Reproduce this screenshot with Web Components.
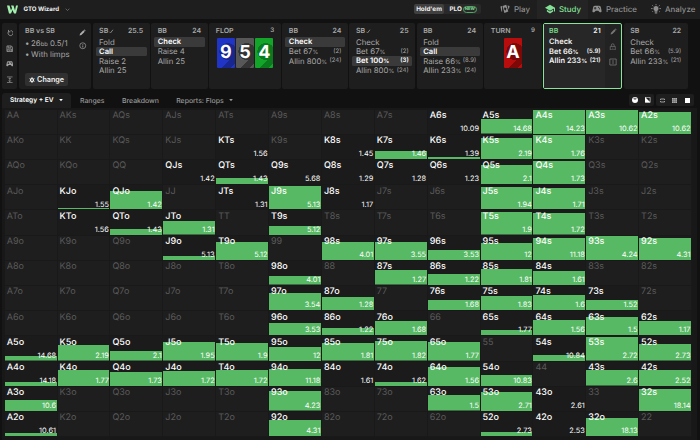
<!DOCTYPE html>
<html lang="en">
<head>
<meta charset="utf-8">
<title>GTO Wizard</title>
<style>
    html, body {
        background: #111;
        height: 440px;
        margin: 0;
        overflow: hidden;
        width: 700px;
    }
    body {
        color: #a8a8a8;
        display: flex;
        flex-direction: column;
        font-family: Inter, "Liberation Sans", sans-serif;
        font-size: 7.8px;
        text-rendering: geometricPrecision;
    }
    .history {
        display: grid;
        gap: 1.6px;
        grid-template-columns: 15px 72.4px 57px 56.6px 71.4px 65.5px 65.7px 66px 57.2px 79px 64px;
        height: 66px;
        padding: 4.5px 0 0 2px;
    }
    .toolbar {
        align-items: stretch;
        display: flex;
        height: 15px;
        margin-top: 3.5px;
        padding-left: 2px;
    }
</style>
</head>
<body>
<app-header>
    <nav-item icon="cards" style="width: 41px">Play</nav-item>
    <nav-item icon="study" active style="width: 51px">Study</nav-item>
    <nav-item icon="gamepad" style="width: 59px">Practice</nav-item>
    <nav-item icon="bulb" style="width: 52px">Analyze</nav-item>
</app-header>

<div class="history">
    <side-tools icons="undo save gamepad fit"></side-tools>
    <game-info name="BB vs SB"><span slot="stack">26<small style="font-size: 5.8px">bb</small> 0.5/1</span><span slot="limps">With limps</span></game-info>
    <action-panel player="SB" stack="25.5" note actions="Fold|*Call|Raise 2|Allin 25"></action-panel>
    <action-panel player="BB" stack="24" actions="*Check|Raise 4|Allin 25"></action-panel>
    <street-panel player="FLOP" stack="3">
        <board-card color="#2034c6" shade="#18268f">9</board-card>
        <board-card color="#575757" shade="#343434">5</board-card>
        <board-card color="#12a52a" shade="#0b7a1d">4</board-card>
    </street-panel>
    <action-panel player="BB" stack="24" actions="*Check|Bet 67%:(2)|Allin 800%:(24)"></action-panel>
    <action-panel player="SB" stack="25" note actions="Check|Bet 67%:(2)|*Bet 100%:(3)|Allin 800%:(24)"></action-panel>
    <action-panel player="BB" stack="24" actions="Fold|*Call|Raise 66%:(8.9)|Allin 233%:(24)"></action-panel>
    <street-panel player="TURN" stack="9">
        <board-card color="#b80d0d" shade="#7c0808">A</board-card>
    </street-panel>
    <action-panel player="BB" stack="21" current actions="Check|Bet 66%:(5.9)|Allin 233%:(21)"></action-panel>
    <action-panel player="SB" stack="22" actions="Check|Bet 66%:(5.9)|Allin 233%:(21)"></action-panel>
</div>

<div class="toolbar">
    <tab-item active arrow style="width: 68.5px">Strategy + EV</tab-item>
    <tab-item style="width: 43.5px">Ranges</tab-item>
    <tab-item style="width: 53px">Breakdown</tab-item>
    <tab-item arrow style="width: 75px">Reports: Flops</tab-item>
    <view-switch></view-switch>
</div>

<range-grid></range-grid>

<script>
'use strict';

(function() {
    const ICONS = {
        undo: '<path d="M8 3v6h6M8 8.5A8 8 0 1 0 15 5" fill="none" stroke="currentColor" stroke-width="2.6"/>',
        save: '<path d="M3 3h14l4 4v14H3z M7 3v6h9V3 M6 21v-8h12v8 M9 17h6" fill="none" stroke="currentColor" stroke-width="2.4"/>',
        gamepad: '<path fill="currentColor" fill-rule="evenodd" d="M7 4h10c3 0 4 2 4.5 5L23 17c.4 3-3 4-5 2l-3-3H9l-3 3c-2 2-5.4 1-5-2L2.5 9C3 6 4 4 7 4zM6.5 7v2h-2v2h2v2h2v-2h2V9h-2V7zM16 6.5a1.4 1.4 0 1 0 .01 0zM18 10a1.4 1.4 0 1 0 .01 0z"/>',
        fit: '<path d="M3 3h18M3 21h18M12 6v12M8.5 9.5L12 6l3.5 3.5M8.5 14.5L12 18l3.5-3.5" fill="none" stroke="currentColor" stroke-width="2.2"/>',
        pencil: '<path fill="currentColor" d="M2 22l1.5-6L15 4.5l4.5 4.5L8 20.5zM16.5 3l2-1.5L22.5 5 21 7.5z"/>',
        info: '<circle cx="12" cy="12" r="9.5" fill="none" stroke="currentColor" stroke-width="2"/><path d="M12 11v6.5M12 6.5v2.2" stroke="currentColor" stroke-width="2.4"/>',
        gear: '<path fill="none" stroke="currentColor" stroke-width="5" d="M12 6a6 6 0 1 0 .01 0z"/><path stroke="currentColor" stroke-width="4" d="M12 1v4M12 19v4M2.5 6.5l3.5 2M18 15.5l3.5 2M2.5 17.5l3.5-2M18 8.5l3.5-2"/>',
        lock: '<path d="M4 11h16v11H4zM7.5 11V7a4.5 4.5 0 0 1 9 0v4M12 15v3" fill="none" stroke="currentColor" stroke-width="2.2"/>',
        compare: '<path d="M9 3H2.5v18H9M15 3h6.5v18H15M12 0v24" fill="none" stroke="currentColor" stroke-width="2.4"/>',
        cards: '<path fill="currentColor" d="M1 6l4-1.5v14L3.5 18zM6 4.5L15 2l5 16-9.5 3.5zM18 3.5l5 1.5-2 9z"/><path fill="#1e1e1e" d="M11.5 7l4 4-2 5-4-4z"/>',
        study: '<path fill="currentColor" d="M12 2L0 9l12 7 9.5-5.5V18H24V9zM4.5 13.5V18l7.5 4.5 7.5-4.5v-4.5L12 18z"/>',
        bulb: '<path fill="currentColor" d="M12 5a6 6 0 0 0-3.5 11v2.5h7V16A6 6 0 0 0 12 5zM9 20h6v2.5H9z"/><path stroke="currentColor" stroke-width="2" d="M12 0v3M0 11h4M20 11h4M3 3l2.5 2.5M21 3l-2.5 2.5M3 19l2-2M21 19l-2-2"/>',
        check: '<path d="M3 17l5 4L21 4" fill="none" stroke="currentColor" stroke-width="4"/>',
        chevron: '<path d="M3 8l9 9 9-9" fill="none" stroke="currentColor" stroke-width="3"/>',
        arrow: '<path fill="currentColor" d="M1 6h22L12 19z"/>'
    };

    const icon = (name, size, extra = '') =>
        `<svg viewBox="0 0 24 24" width="${size}" height="${size}" style="flex: none; display: block; ${extra}">${ICONS[name]}</svg>`;

    class BaseElement extends HTMLElement {
        constructor() {
            super();
            this.attachShadow({ mode: 'open' });
        }

        connectedCallback() {
            this.shadowRoot.innerHTML = this.render();
        }
    }

    class AppHeader extends BaseElement {
        render() {
            return `
                <style>
                    :host {
                        align-items: center;
                        background: #1e1e1e;
                        box-sizing: border-box;
                        display: flex;
                        flex: none;
                        height: 18.5px;
                        overflow: hidden;
                        padding-left: 6.5px;
                    }
                    .name {
                        color: #f2f2f2;
                        font-size: 6.1px;
                        font-weight: 700;
                        margin: 0 5px 0 6px;
                        white-space: nowrap;
                        width: 36px;
                    }
                    .games {
                        align-items: center;
                        background: #292929;
                        border-radius: 2px;
                        color: #f0f0f0;
                        display: flex;
                        font-size: 6.3px;
                        font-weight: 700;
                        height: 10px;
                        margin-left: auto;
                        width: 67px;
                    }
                    .holdem {
                        background: #404040;
                        border-radius: 2px;
                        line-height: 10px;
                        margin-right: 5.5px;
                        text-align: center;
                        width: 30px;
                    }
                    .new {
                        border: 1px solid #4fa565;
                        border-radius: 4px;
                        color: #86e29a;
                        font-size: 4.2px;
                        line-height: 5px;
                        margin-left: 1px;
                        padding: 0 1px;
                    }
                    nav {
                        align-self: stretch;
                        display: flex;
                        margin-left: 15px;
                        width: 204px;
                    }
                </style>
                <svg width="11" height="9" viewBox="0 0 22 18"><path fill="#a3f0b0" d="M0 1h5l3 10 2-5-2-5h5l3 10 2-10h4l-4 16h-4l-3-7-3 7H4z"/></svg>
                <span class="name">GTO Wizard</span>
                ${icon('chevron', 5, 'color: #8a8a8a')}
                <div class="games"><span class="holdem">Hold'em</span><span>PLO</span><span class="new">NEW</span></div>
                <nav><slot></slot></nav>
            `;
        }
    }

    class NavItem extends BaseElement {
        render() {
            return `
                <style>
                    :host {
                        align-items: center;
                        box-sizing: border-box;
                        color: #8f8f8f;
                        display: flex;
                        flex: none;
                        font-size: 7.9px;
                        font-weight: 500;
                        gap: 4px;
                        padding-left: 4px;
                        white-space: nowrap;
                    }
                    :host([active]) {
                        background: #242424;
                        color: #83e097;
                        padding-left: 8px;
                    }
                </style>
                ${icon(this.getAttribute('icon'), 10)}<slot></slot>
            `;
        }
    }

    class SideTools extends BaseElement {
        render() {
            return `
                <style>
                    :host {
                        align-items: center;
                        background: #1e1e1e;
                        border-radius: 2px;
                        box-sizing: border-box;
                        color: #a0a0a0;
                        display: flex;
                        flex-direction: column;
                        justify-content: space-between;
                        padding: 6px 0;
                    }
                </style>
                ${this.getAttribute('icons').split(' ').map(a => icon(a, 7.5)).join('')}
            `;
        }
    }

    class GameInfo extends BaseElement {
        render() {
            return `
                <style>
                    :host {
                        background: #1e1e1e;
                        border-radius: 2px;
                        display: flex;
                        justify-content: space-between;
                    }
                    .info { padding: 3px 0 0 6.5px; }
                    .name { font-size: 7px; font-weight: 600; line-height: 10px; }
                    ul {
                        line-height: 11px;
                        list-style: none;
                        margin: 1.5px 0 0;
                        padding: 0;
                        white-space: nowrap;
                    }
                    li { height: 11px; }
                    li::before { content: "•"; display: inline-block; width: 6px; }
                    button {
                        align-items: center;
                        background: #303030;
                        border: 0;
                        border-radius: 2px;
                        color: #f2f2f2;
                        display: flex;
                        font: 600 7.2px Inter, sans-serif;
                        gap: 2px;
                        height: 13px;
                        justify-content: center;
                        margin-top: 13.5px;
                        padding: 0;
                        width: 43px;
                    }
                    .side {
                        align-items: center;
                        color: #b0b0b0;
                        display: flex;
                        flex-direction: column;
                        gap: 6.5px;
                        padding-top: 5.5px;
                        width: 16px;
                    }
                </style>
                <div class="info">
                    <div class="name">${this.getAttribute('name')}</div>
                    <ul><li><slot name="stack"></slot></li><li><slot name="limps"></slot></li></ul>
                    <button>${icon('gear', 6)}Change</button>
                </div>
                <div class="side">${icon('pencil', 7)}${icon('info', 7.5)}</div>
            `;
        }
    }

    const PANEL_STYLE = `
        :host {
            background: #1e1e1e;
            border-radius: 2px;
            box-sizing: border-box;
            display: block;
            min-width: 0;
            padding: 3px 3px 0;
        }
        header {
            align-items: center;
            display: flex;
            font-size: 7px;
            font-weight: 600;
            line-height: 10px;
            margin-bottom: 1px;
            padding: 0 3.5px;
        }
        header b { font-weight: 600; margin-left: auto; }
    `;

    class ActionPanel extends BaseElement {
        get actions() {
            return this.getAttribute('actions').split('|').map(a => {
                const taken = a[0] === '*';
                const [label, size] = a.replace('*', '').split(':');
                return { taken, label, size };
            });
        }

        render() {
            const current = this.hasAttribute('current');
            return `
                <style>
                    ${PANEL_STYLE}
                    .row {
                        align-items: center;
                        border-radius: 1.5px;
                        display: flex;
                        height: 9.5px;
                        justify-content: space-between;
                        padding: 0 3.5px;
                        white-space: nowrap;
                    }
                    .row small { font-size: 6px; }
                    .row i { font-size: 5.9px; font-style: normal; }
                    .row.taken { background: #3a3a3a; color: #fff; font-weight: 600; }
                    .row.taken span { font-size: 7.6px; }
                    :host([current]) {
                        background: #222;
                        border: 1px solid #85e598;
                        display: grid;
                        grid-template-columns: 1fr 16px;
                        padding: 0;
                    }
                    :host([current]) .main {
                        background: #272727;
                        color: #f2f2f2;
                        font-size: 7.5px;
                        font-weight: 600;
                        padding: 2px 1px 0 1.5px;
                    }
                    :host([current]) header span { color: #79d98c; }
                    .side {
                        align-items: center;
                        color: #777;
                        display: flex;
                        flex-direction: column;
                        gap: 7.5px;
                        padding-top: 4px;
                    }
                </style>
                <div class="main">
                    <header><span>${this.getAttribute('player')}</span>${this.hasAttribute('note') ? icon('check', 4.5, 'margin-left: 1px') : ''}<b>${this.getAttribute('stack')}</b></header>
                    ${this.actions.map(a => `
                        <div class="row${a.taken ? ' taken' : ''}"><span>${a.label.replace('%', '<i>%</i>')}</span>${a.size ? `<small>${a.size}</small>` : ''}</div>
                    `).join('')}
                </div>
                ${current ? `<div class="side">${icon('pencil', 7)}${icon('lock', 7.5)}${icon('compare', 8)}</div>` : ''}
            `;
        }
    }

    class StreetPanel extends BaseElement {
        render() {
            return `
                <style>
                    ${PANEL_STYLE}
                    .cards { display: flex; gap: 1px; justify-content: center; margin-top: 1.5px; }
                    header b { font-size: 6.2px; }
                </style>
                <header><span>${this.getAttribute('player')}</span><b>${this.getAttribute('stack')}</b></header>
                <div class="cards"><slot></slot></div>
            `;
        }
    }

    class BoardCard extends BaseElement {
        render() {
            const shade = this.getAttribute('shade');
            return `
                <style>
                    :host {
                        background: linear-gradient(135deg, transparent 72%, ${shade} 72%, ${shade} 90%, transparent 90%),
                            radial-gradient(circle at 60% 45%, ${shade} 42%, transparent 43%), ${this.getAttribute('color')};
                        border-radius: 1px;
                        color: #fff;
                        display: block;
                        font-size: 18px;
                        font-weight: 700;
                        height: 30px;
                        line-height: 30px;
                        text-align: center;
                        width: 18.2px;
                    }
                </style>
                <slot></slot>
            `;
        }
    }

    class TabItem extends BaseElement {
        render() {
            return `
                <style>
                    :host {
                        align-items: center;
                        border-radius: 3px 3px 0 0;
                        box-sizing: border-box;
                        color: #9a9a9a;
                        display: flex;
                        flex: none;
                        font-size: 6.9px;
                        font-weight: 500;
                        gap: 5px;
                        justify-content: center;
                        white-space: nowrap;
                    }
                    :host([active]) { background: #1e1e1e; color: #fff; font-size: 6.6px; font-weight: 600; }
                </style>
                <slot></slot>${this.hasAttribute('arrow') ? icon('arrow', 4) : ''}
            `;
        }
    }

    class ViewSwitch extends BaseElement {
        render() {
            return `
                <style>
                    :host { align-items: center; display: flex; gap: 2px; margin: 0 6px 0 auto; }
                    div {
                        align-items: center;
                        background: #1e1e1e;
                        border-radius: 2px;
                        display: flex;
                        height: 12px;
                        justify-content: space-around;
                        width: 25px;
                    }
                    div + div { width: 38px; }
                    svg { display: block; }
                </style>
                <div>
                    <svg width="6" height="6" viewBox="0 0 12 12"><circle cx="6" cy="6" r="6" fill="#fff"/><path d="M6 6L2 3.5 6 1l4 2.5z" fill="#777"/></svg>
                    <svg width="5.5" height="5.5" viewBox="0 0 11 11"><path d="M.7.7h9.6v9.6H.7z" fill="none" stroke="#ddd" stroke-width="1.4"/><path d="M0 0l11 11H0z" fill="#fff"/></svg>
                </div>
                <div>
                    <svg width="5" height="5" viewBox="0 0 10 10"><path d="M1 4V2h8v2M1 6v2h8V6" fill="none" stroke="#aaa" stroke-width="1.8"/></svg>
                    <svg width="5" height="5" viewBox="0 0 10 10"><path d="M0 0h10v10H0z" fill="#aaa"/><path d="M3.3 0v10M6.7 0v10M0 3.3h10M0 6.7h10" stroke="#444" stroke-width=".7"/></svg>
                    <svg width="5" height="5" viewBox="0 0 10 10"><path d="M0 0h10v10H0z" fill="#fff"/></svg>
                </div>
            `;
        }
    }

    class HandCell extends BaseElement {
        render() {
            const ev = this.getAttribute('ev');
            return `
                <style>
                    :host {
                        background: linear-gradient(#58b964, #58b964) left bottom / 100% ${this.getAttribute('bar') || 0}px no-repeat, #1e1e1e;
                        background-origin: content-box;
                        border: solid #191919;
                        border-width: 0 1px 1px 0;
                        box-sizing: border-box;
                        color: #5a5a5a;
                        display: flex;
                        flex-direction: column;
                        justify-content: space-between;
                        line-height: 9px;
                        min-width: 0;
                    }
                    :host([ev]) { background-color: #1b1b1b; color: #fff; }
                    .hand { font-size: 9px; margin: 1.4px 0 0 2px; }
                    :host([ev]) .hand { font-weight: 500; }
                    .ev { align-self: flex-end; font-size: 7.4px; margin: 0 .5px .9px 0; }
                </style>
                <span class="hand">${this.getAttribute('hand')}</span>
                ${ev ? `<span class="ev">${ev}</span>` : ''}
            `;
        }
    }

    // hand: [ev, height of the strategy bar]
    const HANDS = {
        A6s: [10.09, 0], A5s: [14.68, 14.5], A4s: [14.23, 24], A3s: [10.62, 24.5], A2s: [10.62, 22],
        KTs: [1.56, 0], K8s: [1.45, 0], K7s: [1.46, 8], K6s: [1.39, 2], K5s: [2.19, 21.5], K4s: [1.76, 24],
        QJs: [1.42, 0], QTs: [1.43, 6], Q9s: [5.68, 0], Q8s: [1.29, 0], Q7s: [1.28, 0], Q6s: [1.23, 0], Q5s: [2.1, 19], Q4s: [1.73, 23],
        KJo: [1.55, 1.3], QJo: [1.42, 18], JTs: [1.31, 0], J9s: [5.13, 23], J8s: [1.17, 0], J5s: [1.94, 22], J4s: [1.71, 21],
        KTo: [1.56, 0], QTo: [1.43, 6], JTo: [1.31, 13.5], T9s: [5.12, 9], T5s: [1.9, 22.5], T4s: [1.72, 21.5],
        J9o: [5.13, 4], T9o: [5.12, 18], '98s': [4.01, 18], '97s': [3.55, 18], '96s': [3.53, 10], '95s': [12, 17], '94s': [11.18, 22], '93s': [4.24, 24.5], '92s': [4.31, 22],
        '98o': [4.01, 8.5], '87s': [1.27, 14.5], '86s': [1.22, 11], '85s': [1.81, 16], '84s': [1.61, 14],
        '97o': [3.54, 17], '87o': [1.28, 13], '76s': [1.68, 10], '75s': [1.83, 14], '74s': [1.6, 15], '73s': [1.52, 10.5],
        '96o': [3.53, 12], '86o': [1.22, 7], '76o': [1.68, 14.5], '65s': [1.77, 5], '64s': [1.56, 15], '63s': [1.5, 18.5], '62s': [1.17, 14],
        A5o: [14.68, 4.5], K5o: [2.19, 15.5], Q5o: [2.1, 9.5], J5o: [1.95, 18.5], T5o: [1.9, 17.5], '95o': [12, 14], '85o': [1.81, 17.5], '75o': [1.82, 19.5], '65o': [1.77, 18.5], '54s': [10.84, 6], '53s': [2.72, 23.5], '52s': [2.73, 16.5],
        A4o: [14.18, 4], K4o: [1.77, 16], Q4o: [1.73, 14], J4o: [1.72, 15], T4o: [1.72, 16], '94o': [11.18, 17], '84o': [1.61, 0], '74o': [1.62, 4], '64o': [1.56, 19], '54o': [10.83, 11], '43s': [2.6, 15.5], '42s': [2.52, 16],
        A3o: [10.6, 11], '93o': [4.23, 19.5], '63o': [1.5, 15.5], '53o': [2.71, 19], '43o': [2.61, 0], '32s': [18.14, 22],
        A2o: [10.61, 3], '92o': [4.31, 16.5], '52o': [2.73, 4], '42o': [2.53, 0], '32o': [18.13, 18]
    };

    class RangeGrid extends BaseElement {
        get cells() {
            const ranks = [...'AKQJT98765432'];
            return ranks.map((row, y) => ranks.map((col, x) => {
                const hand = x === y ? row + col : x > y ? `${row}${col}s` : `${col}${row}o`;
                const data = HANDS[hand];
                return `<hand-cell hand="${hand}"${data ? ` ev="${data[0]}" bar="${data[1]}"` : ''}></hand-cell>`;
            }).join('')).join('');
        }

        render() {
            return `
                <style>
                    :host {
                        background: #181818;
                        box-sizing: border-box;
                        display: block;
                        flex: 1;
                        margin: 0 3px 0 2px;
                        padding: 2.2px 0 0 2.7px;
                    }
                    .grid {
                        display: grid;
                        grid-template-columns: repeat(13, 1fr);
                        grid-template-rows: repeat(13, 1fr);
                        height: 327.4px;
                        width: 687.3px;
                    }
                </style>
                <div class="grid">${this.cells}</div>
            `;
        }
    }

    customElements.define('app-header', AppHeader);
    customElements.define('nav-item', NavItem);
    customElements.define('side-tools', SideTools);
    customElements.define('game-info', GameInfo);
    customElements.define('action-panel', ActionPanel);
    customElements.define('street-panel', StreetPanel);
    customElements.define('board-card', BoardCard);
    customElements.define('tab-item', TabItem);
    customElements.define('view-switch', ViewSwitch);
    customElements.define('hand-cell', HandCell);
    customElements.define('range-grid', RangeGrid);
})();
</script>
</body>
</html>
